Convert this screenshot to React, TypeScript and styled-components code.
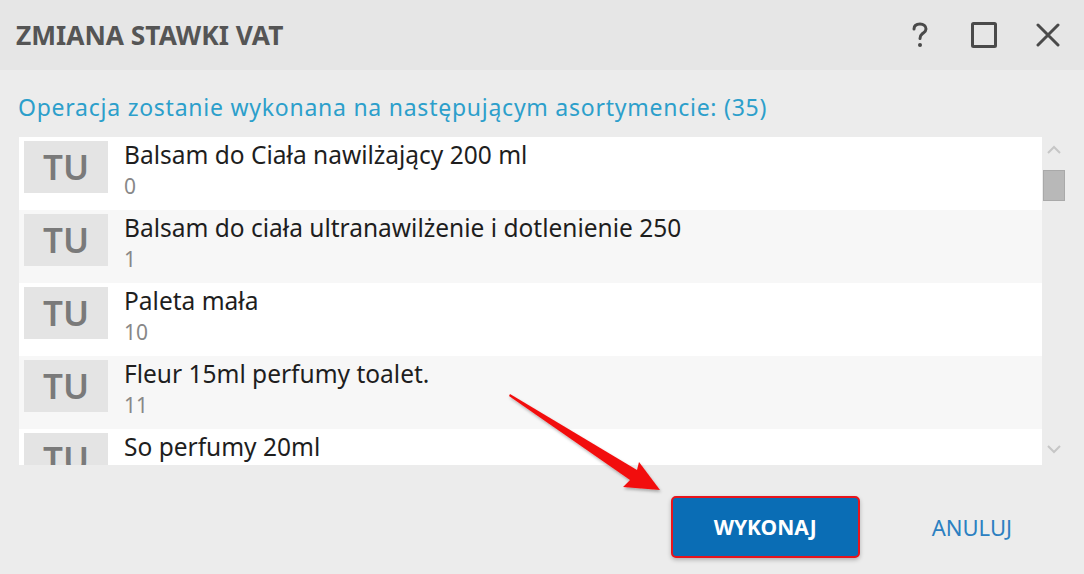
import React from "react";
import styled, { createGlobalStyle } from "styled-components";

const Global = createGlobalStyle`
  html, body { margin: 0; padding: 0; }
  body { width: 1084px; height: 574px; overflow: hidden; background: #ececec; font-family: "Noto Sans", "Open Sans", sans-serif; }
`;

const Dialog = styled.div`
  position: relative;
  width: 1084px;
  height: 574px;
  display: flex;
  flex-direction: column;
  background: #ececec;
`;

const Header = styled.div`
  height: 70px;
  background: #e6e6e6;
  display: flex;
  align-items: center;
  padding: 0 16px;
  box-sizing: border-box;
`;

const Title = styled.h1`
  margin: 0;
  flex: 1;
  font-size: 26.3px;
  font-weight: 700;
  color: #555555;
`;

const HeaderIcons = styled.div`
  display: flex;
  align-items: center;
  gap: 36px;
  margin-right: 6px;
`;

const IconBox = styled.div`
  width: 28px;
  height: 28px;
  display: flex;
  align-items: center;
  justify-content: center;
`;

const Body = styled.div`
  flex: 1;
  display: flex;
  flex-direction: column;
  padding: 0 0 0 18px;
`;

const Subtitle = styled.div`
  margin-top: 23px;
  height: 28px;
  font-size: 23px;
  letter-spacing: 0.75px;
  color: #2c9fcb;
  line-height: 28px;
`;

const ListWrap = styled.div`
  margin-top: 16px;
  display: flex;
  height: 328px;
`;

const List = styled.div`
  width: 1023px;
  margin-left: 1px;
  overflow: hidden;
  display: flex;
  flex-direction: column;
`;

const Row = styled.div<{ $alt?: boolean }>`
  flex: 0 0 73px;
  display: flex;
  align-items: flex-start;
  background: ${(p) => (p.$alt ? "#f7f7f7" : "#ffffff")};
  box-sizing: border-box;
  padding: 4px 0 0 5px;
`;

const Badge = styled.div`
  width: 84px;
  height: 52px;
  flex: 0 0 84px;
  background: #e4e4e4;
  display: flex;
  align-items: center;
  justify-content: center;
  color: #7a7a7a;
  font-size: 35px;
  font-weight: 600;
  line-height: 52px;
`;

const Info = styled.div`
  margin-left: 16px;
  margin-top: -1px;
  display: flex;
  flex-direction: column;
`;

const Name = styled.div`
  font-size: 24.5px;
  color: #1e1e1e;
  line-height: 30px;
  white-space: nowrap;
`;

const Code = styled.div`
  font-size: 21px;
  color: #888888;
  line-height: 24px;
  margin-top: 4px;
`;

const Scrollbar = styled.div`
  width: 24px;
  display: flex;
  flex-direction: column;
  align-items: center;
`;

const Thumb = styled.div`
  width: 20px;
  height: 29px;
  background: #b8b8b8;
  border: 1px solid #a9a9a9;
  margin-top: 7px;
`;

const Chevron = styled.div<{ $bottom?: boolean }>`
  height: 26px;
  margin-bottom: ${(p) => (p.$bottom ? "3px" : "0")};
  display: flex;
  align-items: center;
  justify-content: center;
`;

const Spacer = styled.div`
  flex: 1;
`;

const Footer = styled.div`
  display: flex;
  justify-content: flex-end;
  align-items: center;
  padding-top: 31px;
  margin-right: 72px;
  gap: 72px;
`;

const PrimaryButton = styled.button`
  width: 189px;
  height: 62px;
  background: #0a6db5;
  border: 2px solid #e8141c;
  border-radius: 5px;
  color: #ffffff;
  font-family: "Noto Sans", "Open Sans", sans-serif;
  font-size: 21px;
  font-weight: 700;
  box-shadow: 0 2px 4px rgba(0, 0, 0, 0.25);
  cursor: pointer;
`;

const TextButton = styled.button`
  background: transparent;
  border: none;
  color: #2b80c1;
  font-family: "Noto Sans", "Open Sans", sans-serif;
  font-size: 22px;
  padding: 0;
  cursor: pointer;
`;

const Arrow = styled.svg`
  position: absolute;
  left: 500px;
  top: 385px;
  pointer-events: none;
`;

const items = [
  { name: "Balsam do Ciała nawilżający 200 ml", code: "0" },
  { name: "Balsam do ciała ultranawilżenie i dotlenienie 250", code: "1" },
  { name: "Paleta mała", code: "10" },
  { name: "Fleur 15ml perfumy toalet.", code: "11" },
  { name: "So perfumy 20ml", code: "12" },
];

export default function App() {
  return (
    <Dialog>
      <Global />
      <Header>
        <Title>ZMIANA STAWKI VAT</Title>
        <HeaderIcons>
          <IconBox>
            <svg width="20" height="28" viewBox="0 0 20 28">
              <path d="M4 8 C4 4.5 6.5 3 10 3 C13.5 3 16 5 16 8 C16 10.5 14 11.5 12.3 12.8 C10.8 14 10 15 10 17.5" fill="none" stroke="#4a4a4a" strokeWidth="3" strokeLinecap="round" />
              <circle cx="10" cy="24" r="2" fill="#4a4a4a" />
            </svg>
          </IconBox>
          <IconBox>
            <svg width="26" height="26" viewBox="0 0 26 26">
              <rect x="1.5" y="1.5" width="23" height="23" fill="none" stroke="#4a4a4a" strokeWidth="3" rx="1" />
            </svg>
          </IconBox>
          <IconBox>
            <svg width="24" height="24" viewBox="0 0 24 24">
              <path d="M2 2 L22 22 M22 2 L2 22" stroke="#4a4a4a" strokeWidth="3" strokeLinecap="round" />
            </svg>
          </IconBox>
        </HeaderIcons>
      </Header>
      <Body>
        <Subtitle>Operacja zostanie wykonana na następującym asortymencie: (35)</Subtitle>
        <ListWrap>
          <List>
            {items.map((it, i) => (
              <Row key={i} $alt={i % 2 === 1}>
                <Badge>TU</Badge>
                <Info>
                  <Name>{it.name}</Name>
                  <Code>{it.code}</Code>
                </Info>
              </Row>
            ))}
          </List>
          <Scrollbar>
            <Chevron>
              <svg width="16" height="10" viewBox="0 0 16 10">
                <path d="M2 8 L8 2 L14 8" fill="none" stroke="#c6c6c6" strokeWidth="2" />
              </svg>
            </Chevron>
            <Thumb />
            <Spacer />
            <Chevron $bottom>
              <svg width="16" height="10" viewBox="0 0 16 10">
                <path d="M2 2 L8 8 L14 2" fill="none" stroke="#c6c6c6" strokeWidth="2" />
              </svg>
            </Chevron>
          </Scrollbar>
        </ListWrap>
        <Footer>
          <PrimaryButton>WYKONAJ</PrimaryButton>
          <TextButton>ANULUJ</TextButton>
        </Footer>
      </Body>
      <Arrow width="180" height="120" viewBox="0 0 180 120">
        <defs>
          <filter id="sh" x="-20%" y="-20%" width="140%" height="140%">
            <feDropShadow dx="1" dy="2" stdDeviation="1.5" floodColor="#000" floodOpacity="0.3" />
          </filter>
        </defs>
        <polygon
          points="10,9 137,85 139,77 160,105 123,102 130,95 9,11"
          fill="#f21010"
          filter="url(#sh)"
        />
      </Arrow>
    </Dialog>
  );
}
